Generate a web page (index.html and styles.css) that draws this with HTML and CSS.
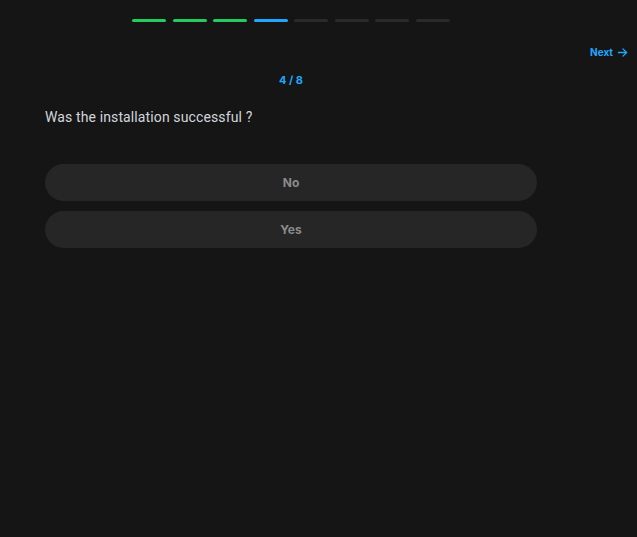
FILE: index.html
```html
<!DOCTYPE html>
<html>
<head>
<meta charset="utf-8">
<link rel="stylesheet" href="styles.css">
</head>
<body>
<div class="page">
  <div class="main">
    <div class="progress">
      <span class="seg done"></span>
      <span class="seg done"></span>
      <span class="seg done"></span>
      <span class="seg current"></span>
      <span class="seg"></span>
      <span class="seg"></span>
      <span class="seg"></span>
      <span class="seg"></span>
    </div>
    <div class="counter">4 / 8</div>
    <div class="question">Was the installation successful ?</div>
    <div class="options">
      <button class="option">No</button>
      <button class="option">Yes</button>
    </div>
  </div>
  <div class="side">
    <a class="next">Next
      <svg width="11" height="11" viewBox="0 0 12 12" fill="none" stroke="currentColor" stroke-width="1.4" stroke-linecap="round" stroke-linejoin="round"><path d="M1.5 6h9M6.5 2l4 4-4 4"/></svg>
    </a>
  </div>
</div>
</body>
</html>
```

FILE: styles.css
```css
html, body {
  margin: 0;
  padding: 0;
  background: #151515;
  height: 100%;
}
body {
  font-family: Inter, "Noto Sans", sans-serif;
}
.page {
  display: flex;
}
.main {
  width: 492px;
  padding: 19px 0 0 45px;
  display: flex;
  flex-direction: column;
}
.progress {
  display: flex;
  justify-content: center;
  gap: 6.6px;
}
.seg {
  width: 34px;
  height: 3px;
  border-radius: 2px;
  background: #2a2a2a;
}
.seg.done { background: #22cc5e; }
.seg.current { background: #1ea7fd; }
.counter {
  margin-top: 51px;
  text-align: center;
  color: #1ea7fd;
  font-size: 11px;
  font-weight: 700;
  line-height: 14px;
}
.question {
  margin-top: 21px;
  color: #d2d6dc;
  font-family: Roboto, "Noto Sans", sans-serif;
  font-size: 14px;
  letter-spacing: 0.12px;
  line-height: 18px;
}
.options {
  margin-top: 38px;
  display: flex;
  flex-direction: column;
  gap: 10px;
}
.option {
  height: 37px;
  border: none;
  border-radius: 19px;
  background: #262626;
  color: #8b8b8b;
  font-family: Inter, "Noto Sans", sans-serif;
  font-size: 12px;
  font-weight: 700;
  padding: 0;
}
.side {
  flex: 1;
  display: flex;
  justify-content: flex-end;
  padding: 45px 9px 0 0;
}
.next {
  display: flex;
  align-items: center;
  gap: 4px;
  height: 14px;
  color: #1ea7fd;
  font-size: 10px;
  font-weight: 700;
}
```
